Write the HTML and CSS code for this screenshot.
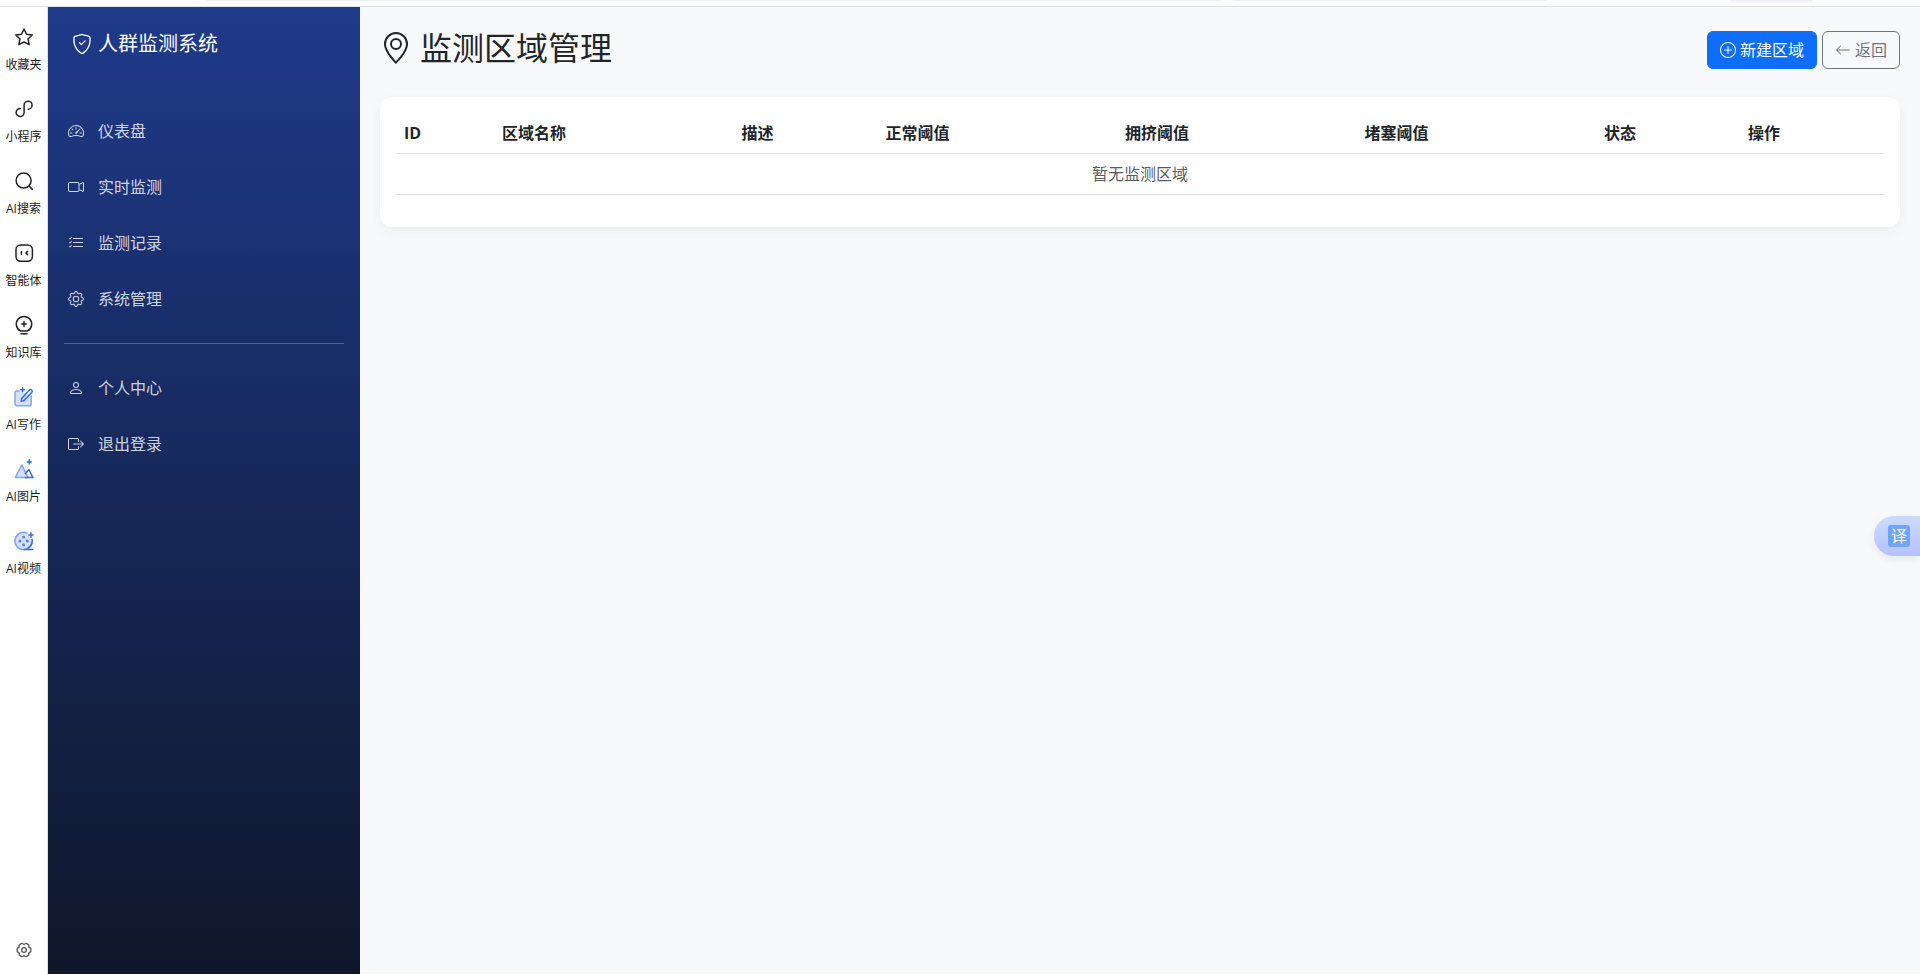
FILE: index.html
```
<!DOCTYPE html>
<html lang="zh-CN">
<head>
  <meta charset="UTF-8">
  <meta name="viewport" content="width=device-width, initial-scale=1.0">
  <title>监测区域管理 - 人群监测系统</title>
  <link rel="stylesheet" href="styles.css">
</head>
<body>

<div class="topbar">
  <div class="topbar-line"></div>
  <div class="topbar-line second"></div>
  <div class="topbar-tab"></div>
</div>

<div class="page">

  <!-- browser tool rail -->
  <aside class="rail">
    <a class="rail-item">
      <svg viewBox="0 0 20 20"><path d="M10 2l2.5 5.2 5.7.8-4.1 4 1 5.7-5.1-2.7-5.1 2.7 1-5.7-4.1-4 5.7-.8z"/></svg>
      <span>收藏夹</span>
    </a>
    <a class="rail-item">
      <svg viewBox="0 0 20 20"><path d="M6.3 9.6a4 4 0 1 0 3.8 4V6.2a4 4 0 1 1 4 4"/></svg>
      <span>小程序</span>
    </a>
    <a class="rail-item">
      <svg viewBox="0 0 20 20"><circle cx="9.6" cy="9.6" r="7.5"/><path d="M15 15l3.4 3.4"/></svg>
      <span>AI搜索</span>
    </a>
    <a class="rail-item">
      <svg viewBox="0 0 20 20"><rect x="2" y="2" width="16.4" height="16.2" rx="4.6"/><path d="M7.4 8.4v3.2M13.600 8.400L11.800 10l1.800 1.600"/></svg>
      <span>智能体</span>
    </a>
    <a class="rail-item">
      <svg viewBox="0 0 20 20"><path d="M6.6 16a7.700 7.700 0 1 1 6.800 0zM7 18.800h6M10 6.600v4.800M7.600 9h4.800"/></svg>
      <span>知识库</span>
    </a>
    <a class="rail-item blue">
      <svg viewBox="0 0 20 20"><path class="soft" d="M5 4H3.400A2.400 2.400 0 0 0 1 6.400v10A2.400 2.400 0 0 0 3.400 18.800h11.400a2.400 2.400 0 0 0 2.400-2.400V9"/><path d="M7.200 14.400l.5-3 7.800-8.300a1.500 1.500 0 0 1 2.300 2.200l-7.700 8.200zM8.600.8v4M6.600 2.800h4"/></svg>
      <span>AI写作</span>
    </a>
    <a class="rail-item blue">
      <svg viewBox="0 0 20 20"><path class="soft" d="M1.200 18.600L7.800 6 14 18.600z"/><path d="M11.400 14.500l3.400-4 4.200 8.100M15.200.8v4.200M13.100 2.900h4.200M11.500 18.600H19"/></svg>
      <span>AI图片</span>
    </a>
    <a class="rail-item blue">
      <svg viewBox="0 0 20 20"><path class="soft" d="M13 2.100A8.600 8.600 0 1 0 18.200 10"/><path d="M10 18.600h8.600M18.200 8.600A8.600 8.600 0 0 1 14 17M17 2v4.200M14.900 4.100h4.200"/><g class="dots"><circle cx="9.600" cy="6" r="1.500"/><circle cx="9.600" cy="13.800" r="1.500"/><circle cx="5.900" cy="9.900" r="1.500"/><circle cx="13.300" cy="9.900" r="1.500"/></g></svg>
      <span>AI视频</span>
    </a>
    <a class="rail-setting">
      <svg viewBox="0 0 18 18"><path d="M16.700 7.200v3.600l-2.300 1.300v2.700l-3.100 1.800L9 15.200l-2.300 1.400-3.100-1.800v-2.700l-2.300-1.300V7.200l2.300-1.300V3.200l3.100-1.800L9 2.800l2.300-1.400 3.100 1.800v2.700z"/><circle cx="9" cy="9" r="2.600"/></svg>
    </a>
  </aside>

  <nav class="sidebar">
    <div class="brand">
      <svg class="bi" viewBox="0 0 16 16"><path d="M5.338 1.590a61 61 0 0 0-2.837.856.480.480 0 0 0-.328.390c-.554 4.157.726 7.190 2.253 9.188a10.700 10.700 0 0 0 2.287 2.233c.346.244.652.420.893.533q.180.085.293.118a1 1 0 0 0 .101.025 1 1 0 0 0 .1-.025q.114-.034.294-.118c.240-.113.547-.290.893-.533a10.700 10.700 0 0 0 2.287-2.233c1.527-1.997 2.807-5.031 2.253-9.188a.480.480 0 0 0-.328-.390c-.651-.213-1.750-.560-2.837-.855C9.552 1.290 8.531 1.067 8 1.067c-.530 0-1.552.223-2.662.524zM5.072.560C6.157.265 7.310 0 8 0s1.843.265 2.928.560c1.110.300 2.229.655 2.887.870a1.540 1.540 0 0 1 1.044 1.262c.596 4.477-.787 7.795-2.465 9.990a11.800 11.800 0 0 1-2.517 2.453 7 7 0 0 1-1.048.625c-.280.132-.581.240-.829.240s-.548-.108-.829-.240a7 7 0 0 1-1.048-.625 11.800 11.800 0 0 1-2.517-2.453C1.928 10.487.545 7.169 1.141 2.692A1.540 1.540 0 0 1 2.185 1.430 63 63 0 0 1 5.072.560"/><path d="M10.854 5.146a.5.5 0 0 1 0 .708l-3 3a.5.5 0 0 1-.708 0l-1.500-1.500a.5.5 0 1 1 .708-.708L7.500 7.793l2.646-2.647a.5.5 0 0 1 .708 0"/></svg>
      <span>人群监测系统</span>
    </div>
    <a class="nav-link">
      <svg class="bi" viewBox="0 0 16 16"><path d="M8 4a.5.5 0 0 1 .5.5V6a.5.5 0 0 1-1 0V4.500A.5.5 0 0 1 8 4M3.732 5.732a.5.5 0 0 1 .707 0l.915.914a.5.5 0 1 1-.708.708l-.914-.915a.5.5 0 0 1 0-.707M2 10a.5.5 0 0 1 .5-.5h1.586a.5.5 0 0 1 0 1H2.500A.5.5 0 0 1 2 10m9.500 0a.5.5 0 0 1 .5-.5h1.500a.5.5 0 0 1 0 1H12a.5.5 0 0 1-.5-.5m.754-4.246a.390.390 0 0 0-.527-.020L7.547 9.310a.910.910 0 1 0 1.302 1.258l3.434-4.297a.390.390 0 0 0-.029-.518z"/><path fill-rule="evenodd" d="M0 10a8 8 0 1 1 15.547 2.661c-.442 1.253-1.845 1.602-2.932 1.250C11.309 13.488 9.475 13 8 13c-1.474 0-3.310.488-4.615.911-1.087.352-2.490.003-2.932-1.250A8 8 0 0 1 0 10m8-7a7 7 0 0 0-6.603 9.329c.203.575.923.876 1.680.630C4.397 12.533 6.358 12 8 12s3.604.532 4.923.960c.757.245 1.477-.056 1.680-.631A7 7 0 0 0 8 3"/></svg>
      <span>仪表盘</span>
    </a>
    <a class="nav-link">
      <svg class="bi" viewBox="0 0 16 16"><path fill-rule="evenodd" d="M0 5a2 2 0 0 1 2-2h7.500a2 2 0 0 1 1.983 1.738l3.110-1.382A1 1 0 0 1 16 4.269v7.462a1 1 0 0 1-1.406.913l-3.111-1.382A2 2 0 0 1 9.500 13H2a2 2 0 0 1-2-2zm11.500 5.175 3.500 1.556V4.269l-3.500 1.556zM2 4a1 1 0 0 0-1 1v6a1 1 0 0 0 1 1h7.500a1 1 0 0 0 1-1V5a1 1 0 0 0-1-1z"/></svg>
      <span>实时监测</span>
    </a>
    <a class="nav-link">
      <svg class="bi" viewBox="0 0 16 16"><path fill-rule="evenodd" d="M5 11.500a.5.5 0 0 1 .5-.5h9a.5.5 0 0 1 0 1h-9a.5.5 0 0 1-.5-.5m0-4a.5.5 0 0 1 .5-.5h9a.5.5 0 0 1 0 1h-9a.5.5 0 0 1-.5-.5m0-4a.5.5 0 0 1 .5-.5h9a.5.5 0 0 1 0 1h-9a.5.5 0 0 1-.5-.5M3.854 2.146a.5.5 0 0 1 0 .708l-1.500 1.500a.5.5 0 0 1-.708 0l-.5-.5a.5.5 0 1 1 .708-.708L2 3.293l1.146-1.147a.5.5 0 0 1 .708 0m0 4a.5.5 0 0 1 0 .708l-1.500 1.500a.5.5 0 0 1-.708 0l-.5-.5a.5.5 0 1 1 .708-.708L2 7.293l1.146-1.147a.5.5 0 0 1 .708 0m0 4a.5.5 0 0 1 0 .708l-1.500 1.500a.5.5 0 0 1-.708 0l-.5-.5a.5.5 0 0 1 .708-.708l.146.147 1.146-1.147a.5.5 0 0 1 .708 0"/></svg>
      <span>监测记录</span>
    </a>
    <a class="nav-link">
      <svg class="bi" viewBox="0 0 16 16"><path d="M8 4.754a3.246 3.246 0 1 0 0 6.492 3.246 3.246 0 0 0 0-6.492M5.754 8a2.246 2.246 0 1 1 4.492 0 2.246 2.246 0 0 1-4.492 0"/><path d="M9.796 1.343c-.527-1.790-3.065-1.790-3.592 0l-.094.319a.873.873 0 0 1-1.255.520l-.292-.160c-1.640-.892-3.433.902-2.540 2.541l.159.292a.873.873 0 0 1-.520 1.255l-.319.094c-1.790.527-1.790 3.065 0 3.592l.319.094a.873.873 0 0 1 .520 1.255l-.160.292c-.892 1.640.901 3.434 2.541 2.540l.292-.159a.873.873 0 0 1 1.255.520l.094.319c.527 1.790 3.065 1.790 3.592 0l.094-.319a.873.873 0 0 1 1.255-.520l.292.160c1.640.893 3.434-.902 2.540-2.541l-.159-.292a.873.873 0 0 1 .520-1.255l.319-.094c1.790-.527 1.790-3.065 0-3.592l-.319-.094a.873.873 0 0 1-.520-1.255l.160-.292c.893-1.640-.902-3.433-2.541-2.540l-.292.159a.873.873 0 0 1-1.255-.520zm-2.633.283c.246-.835 1.428-.835 1.674 0l.094.319a1.873 1.873 0 0 0 2.693 1.115l.291-.160c.764-.415 1.600.420 1.184 1.185l-.159.292a1.873 1.873 0 0 0 1.116 2.692l.318.094c.835.246.835 1.428 0 1.674l-.319.094a1.873 1.873 0 0 0-1.115 2.693l.160.291c.415.764-.420 1.600-1.185 1.184l-.291-.159a1.873 1.873 0 0 0-2.693 1.116l-.094.318c-.246.835-1.428.835-1.674 0l-.094-.319a1.873 1.873 0 0 0-2.692-1.115l-.292.160c-.764.415-1.600-.420-1.184-1.185l.159-.291A1.873 1.873 0 0 0 1.945 8.930l-.319-.094c-.835-.246-.835-1.428 0-1.674l.319-.094A1.873 1.873 0 0 0 3.060 4.377l-.160-.292c-.415-.764.420-1.600 1.185-1.184l.292.159a1.873 1.873 0 0 0 2.692-1.115z"/></svg>
      <span>系统管理</span>
    </a>
    <hr>
    <a class="nav-link">
      <svg class="bi" viewBox="0 0 16 16"><path d="M8 8a3 3 0 1 0 0-6 3 3 0 0 0 0 6m2-3a2 2 0 1 1-4 0 2 2 0 0 1 4 0m4 8c0 1-1 1-1 1H3s-1 0-1-1 1-4 6-4 6 3 6 4m-1-.004c-.001-.246-.154-.986-.832-1.664C11.516 10.680 10.289 10 8 10s-3.516.680-4.168 1.332c-.678.678-.830 1.418-.832 1.664z"/></svg>
      <span>个人中心</span>
    </a>
    <a class="nav-link">
      <svg class="bi" viewBox="0 0 16 16"><path fill-rule="evenodd" d="M10 12.500a.5.5 0 0 1-.5.5h-8a.5.5 0 0 1-.5-.5v-9a.5.5 0 0 1 .5-.5h8a.5.5 0 0 1 .5.5v2a.5.5 0 0 0 1 0v-2A1.500 1.500 0 0 0 9.500 2h-8A1.500 1.500 0 0 0 0 3.500v9A1.500 1.500 0 0 0 1.500 14h8a1.500 1.500 0 0 0 1.500-1.500v-2a.5.5 0 0 0-1 0z"/><path fill-rule="evenodd" d="M15.854 8.354a.5.5 0 0 0 0-.708l-3-3a.5.5 0 0 0-.708.708L14.293 7.500H5.500a.5.5 0 0 0 0 1h8.793l-2.147 2.146a.5.5 0 0 0 .708.708z"/></svg>
      <span>退出登录</span>
    </a>
  </nav>

  <main class="content">
    <div class="header">
      <h1>
        <svg class="bi" viewBox="0 0 16 16"><path d="M12.166 8.940c-.524 1.062-1.234 2.120-1.960 3.070A32 32 0 0 1 8 14.580a32 32 0 0 1-2.206-2.570c-.726-.950-1.436-2.008-1.960-3.070C3.304 7.867 3 6.862 3 6a5 5 0 0 1 10 0c0 .862-.305 1.867-.834 2.940M8 16s6-5.686 6-10A6 6 0 0 0 2 6c0 4.314 6 10 6 10"/><path d="M8 8a2 2 0 1 1 0-4 2 2 0 0 1 0 4m0 1a3 3 0 1 0 0-6 3 3 0 0 0 0 6"/></svg>
        <span>监测区域管理</span>
      </h1>
      <div class="actions">
        <button class="btn btn-primary">
          <svg class="bi" viewBox="0 0 16 16"><path d="M8 15A7 7 0 1 1 8 1a7 7 0 0 1 0 14m0 1A8 8 0 1 0 8 0a8 8 0 0 0 0 16"/><path d="M8 4a.5.5 0 0 1 .5.5v3h3a.5.5 0 0 1 0 1h-3v3a.5.5 0 0 1-1 0v-3h-3a.5.5 0 0 1 0-1h3v-3A.5.5 0 0 1 8 4"/></svg>
          <span>新建区域</span>
        </button>
        <button class="btn btn-outline">
          <svg class="bi" viewBox="0 0 16 16"><path fill-rule="evenodd" d="M15 8a.5.5 0 0 0-.5-.5H2.707l3.147-3.146a.5.5 0 1 0-.708-.708l-4 4a.5.5 0 0 0 0 .708l4 4a.5.5 0 0 0 .708-.708L2.707 8.500H14.500A.5.5 0 0 0 15 8"/></svg>
          <span>返回</span>
        </button>
      </div>
    </div>

    <div class="card">
      <table class="table">
        <colgroup>
          <col class="c-id"><col class="c-name"><col class="c-desc"><col class="c-num"><col class="c-num"><col class="c-num"><col class="c-state"><col>
        </colgroup>
        <thead>
          <tr>
            <th>ID</th>
            <th>区域名称</th>
            <th>描述</th>
            <th>正常阈值</th>
            <th>拥挤阈值</th>
            <th>堵塞阈值</th>
            <th>状态</th>
            <th>操作</th>
          </tr>
        </thead>
        <tbody>
          <tr><td colspan="8" class="empty">暂无监测区域</td></tr>
        </tbody>
      </table>
    </div>
  </main>
</div>

<div class="translate"><span>译</span></div>

</body>
</html>
```

FILE: styles.css
```
* {
    box-sizing: border-box;
}
body {
    margin: 0;
    height: 975px;
    overflow: hidden;
    background: #fff;
    color: #212529;
    font: 16px/24px "Open Sans", "Noto Sans CJK SC", sans-serif;
}
.topbar {
    display: flex;
    height: 7px;
    border-bottom: 1px solid #dee1e6;
}
.topbar-line {
    width: 1014px;
    height: 1px;
    margin-left: 207px;
    background: #eee;
}
.topbar-line.second {
    width: 314px;
    margin-left: 12px;
}
.topbar-tab {
    width: 83px;
    height: 2px;
    margin-left: 183px;
    border-radius: 0 0 4px 4px;
    background: #edeffd;
}
.page {
    display: flex;
    height: 967px;
}
.bi {
    width: 1em;
    height: 1em;
    fill: currentColor;
    flex: none;
}

/* left tool rail */
.rail {
    display: flex;
    flex-direction: column;
    width: 48px;
    height: 968px;
    padding-top: 20px;
    border-right: 1px solid #dee1e6;
    flex: none;
}
.rail-item {
    display: flex;
    flex-direction: column;
    align-items: center;
    height: 72px;
    color: #1b1b1b;
    font-size: 12px;
    line-height: 18px;
    white-space: nowrap;
    flex: none;
}
.rail svg {
    width: 20px;
    height: 20px;
    fill: none;
    stroke: #222;
    stroke-width: 1.5;
    stroke-linecap: round;
    stroke-linejoin: round;
    overflow: visible;
}
.rail-item span {
    margin-top: 9px;
}
.rail .blue svg {
    stroke: #2f6bff;
}
.rail .blue .soft {
    fill: #d5e1ff;
    stroke: #7ea6ff;
}
.rail .dots {
    fill: #4c82ff;
    stroke: none;
}
.rail-setting {
    display: flex;
    justify-content: center;
    margin-top: auto;
    padding-bottom: 17px;
}
.rail .rail-setting svg {
    width: 16px;
    height: 16px;
    stroke: #555;
}

.sidebar {
    width: 312px;
    padding: 17px 16px;
    background: linear-gradient(180deg, #1e3a8a 0%, #0f172a 100%);
    color: #fff;
    flex: none;
}
.brand {
    display: flex;
    align-items: center;
    gap: 6px;
    height: 40px;
    padding-left: 8px;
    margin-bottom: 43px;
    font-size: 20px;
}
.nav-link {
    display: flex;
    align-items: center;
    gap: 14px;
    height: 48px;
    margin-bottom: 8px;
    padding: 0 3px 0 4px;
    color: rgba(255, 255, 255, .8);
}
.nav-link .bi {
    width: 16px;
    height: 16px;
}
.sidebar hr {
    height: 1px;
    margin: 20px 0;
    border: 0;
    background: rgba(255, 255, 255, .25);
}

.content {
    flex: 1;
    padding: 16px 20px;
    background: #f8f9fa;
}
.header {
    display: flex;
    justify-content: space-between;
    height: 74px;
}
h1 {
    display: flex;
    align-items: center;
    gap: 8px;
    height: 49px;
    margin: 0;
    font-size: 32px;
    font-weight: 400;
}
.actions {
    display: flex;
    gap: 5px;
    padding-top: 8px;
}
.btn {
    display: flex;
    align-items: center;
    gap: 4px;
    height: 38px;
    padding: 0 12px;
    border: 1px solid;
    border-radius: 6px;
    font: inherit;
}
.btn-primary {
    border-color: #0d6efd;
    background: #0d6efd;
    color: #fff;
}
.btn-outline {
    border-color: #6c757d;
    background: none;
    color: #6c757d;
}

.card {
    height: 130px;
    padding: 16px;
    border-radius: 12px;
    background: #fff;
    box-shadow: 0 4px 12px rgba(0, 0, 0, .05);
}
.table {
    width: 100%;
    table-layout: fixed;
    border-collapse: separate;
    border-spacing: 0;
}
.table th,
.table td {
    height: 41px;
    padding: 8px;
    border-bottom: 1px solid #dee2e6;
    text-align: left;
}
.table th {
    font-weight: 700;
}
.table .empty {
    color: rgba(33, 37, 41, .75);
    text-align: center;
}
.c-id {
    width: 98px;
}
.c-name,
.c-num {
    width: 239.500px;
}
.c-desc,
.c-state {
    width: 144px;
}

/* floating translate button on the window edge */
.translate {
    position: absolute;
    top: 516px;
    right: 0;
    display: flex;
    align-items: center;
    width: 46px;
    height: 40px;
    padding-left: 14px;
    border-radius: 20px 0 0 20px;
    background: linear-gradient(#cddafd, #b5c2ff);
    box-shadow: 0 3px 10px rgba(0, 0, 0, .08);
}
.translate span {
    width: 22px;
    height: 22px;
    border-radius: 3px;
    background: #73a5f6;
    color: #fff;
    font-size: 16px;
    line-height: 22px;
    text-align: center;
}
```
